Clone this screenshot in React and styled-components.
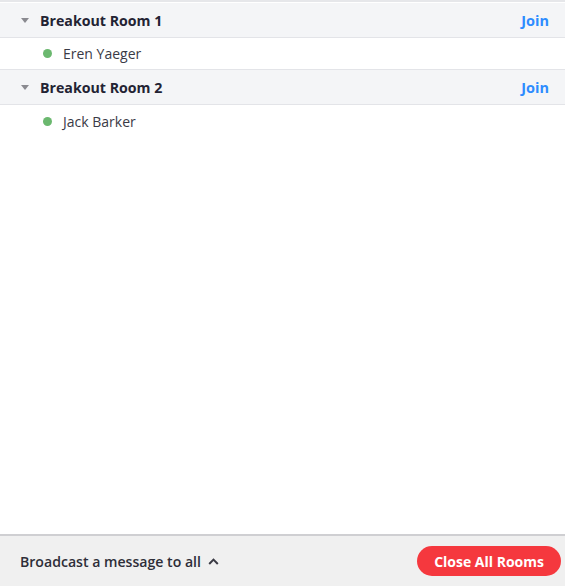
import React from 'react';
import styled, { createGlobalStyle } from 'styled-components';

const GlobalStyle = createGlobalStyle`
  html, body {
    margin: 0;
    padding: 0;
    background: #fff;
  }
  body {
    font-family: "Open Sans", "Noto Sans", sans-serif;
    color: #232333;
  }
`;

const rooms = [
  { id: 1, name: 'Breakout Room 1', members: ['Eren Yaeger'] },
  { id: 2, name: 'Breakout Room 2', members: ['Jack Barker'] },
];

export default function App() {
  return (
    <>
      <GlobalStyle />
      <Panel>
        <RoomList>
          {rooms.map(room => (
            <Room key={room.id}>
              <RoomHeader>
                <Caret />
                <RoomName>{room.name}</RoomName>
                <JoinLink>Join</JoinLink>
              </RoomHeader>
              {room.members.map(m => (
                <Member key={m}>
                  <Dot />
                  <MemberName>{m}</MemberName>
                </Member>
              ))}
            </Room>
          ))}
        </RoomList>
        <Footer>
          <Broadcast>
            Broadcast a message to all
            <svg width="11" height="7" viewBox="0 0 11 7">
              <path d="M1.2 6 L5.5 1.6 L9.8 6" fill="none" stroke="#3a3a44" strokeWidth="2" />
            </svg>
          </Broadcast>
          <CloseButton>Close All Rooms</CloseButton>
        </Footer>
      </Panel>
    </>
  );
}

const Panel = styled.div`
  width: 565px;
  height: 586px;
  display: flex;
  flex-direction: column;
  border-top: 2px solid #e6e7ea;
  box-sizing: border-box;
  background: #fff;
`;

const RoomList = styled.div`
  flex: 1;
  padding-top: 1px;
`;

const Room = styled.div``;

const RoomHeader = styled.div`
  height: 35px;
  display: flex;
  align-items: center;
  padding: 0 16px 0 21px;
  background: #f4f5f7;
  border-bottom: 1px solid #e3e4e8;
  box-sizing: border-box;
`;

const Caret = styled.span`
  width: 0;
  height: 0;
  border-left: 4.5px solid transparent;
  border-right: 4.5px solid transparent;
  border-top: 5px solid #8a8a90;
  margin-right: 11px;
`;

const RoomName = styled.span`
  flex: 1;
  font-size: 14.2px;
  font-weight: 700;
  color: #232333;
`;

const JoinLink = styled.a`
  font-size: 14.5px;
  font-weight: 700;
  color: #2d8cff;
  cursor: pointer;
`;

const Member = styled.div`
  height: 32px;
  display: flex;
  align-items: center;
  padding-left: 43px;
  border-bottom: 1px solid #e3e4e8;
  box-sizing: border-box;
  ${Room}:last-child & {
    border-bottom: none;
  }
`;

const Dot = styled.span`
  width: 9px;
  height: 9px;
  border-radius: 50%;
  background: #6bb86f;
  margin-right: 11px;
`;

const MemberName = styled.span`
  font-size: 14px;
  color: #3a3a46;
`;

const Footer = styled.div`
  height: 50px;
  display: flex;
  align-items: center;
  justify-content: space-between;
  padding: 0 4px 0 20px;
  background: #f0f0f0;
  border-top: 2px solid #cfcfd2;
`;

const Broadcast = styled.div`
  display: flex;
  align-items: center;
  gap: 7px;
  font-size: 14.1px;
  font-weight: 600;
  color: #2e2e38;
`;

const CloseButton = styled.button`
  height: 30px;
  padding: 0 17px;
  border: none;
  border-radius: 15px;
  background: #f5383e;
  color: #fff;
  font-family: inherit;
  font-size: 14px;
  font-weight: 700;
  cursor: pointer;
`;
